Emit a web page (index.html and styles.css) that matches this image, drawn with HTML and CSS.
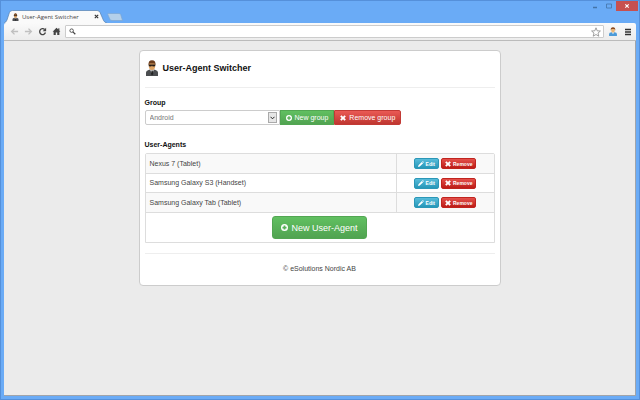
FILE: index.html
```html
<!DOCTYPE html>
<html lang="en">
<head>
<meta charset="utf-8">
<title>User-Agent Switcher</title>
<link rel="stylesheet" href="styles.css">
</head>
<body>
<svg class="defs" aria-hidden="true">
  <symbol id="agent" viewBox="0 0 14 16">
    <path fill="#4b4d50" d="M1 16v-3.500q0-2 2.500-2.500L5 9.500h4l1.500.5q2.500.500 2.500 2.500V16z"/>
    <path fill="#eee" d="M5 9.500h4L7 14z"/>
    <path fill="#222" d="M6.500 10.500h1.200l.6 3.500L7 15.500 6 14z"/>
    <ellipse cx="7" cy="5.500" rx="3.200" ry="4.500" fill="#dfa565"/>
    <path fill="#6b3c1c" d="M3.500 5.500Q3 .3 7 .3t3.500 5.200L9.500 3.500h-5z"/>
    <path fill="#221a17" d="M3.800 4.600h6.400v1.600l-2.500.4L7 5.600l-.8 1-2.400-.4z"/>
  </symbol>
  <symbol id="person" viewBox="0 0 14 16">
    <path fill="#4d9bd8" d="M0 16v-3.500Q0 10 4.500 9.500h5Q14 10 14 12.500V16z"/>
    <path fill="#fff" d="M5 9.500h4L7 13z"/>
    <ellipse cx="7" cy="5.500" rx="3.400" ry="4.500" fill="#eab676"/>
    <path fill="#8b4a20" d="M3 6Q2.500.3 7 .3T11 6L9.500 3.500h-5z"/>
  </symbol>
  <symbol id="plus" viewBox="0 0 12 12">
    <path fill="#fff" fill-rule="evenodd" d="M6 0a6 6 0 1 0 0 12A6 6 0 0 0 6 0zM4.500 2.500h3v2h2v3h-2v2h-3v-2h-2v-3h2z"/>
  </symbol>
  <symbol id="cross" viewBox="0 0 12 12">
    <path fill="#fff" d="M3 .3l3 3 3-3L11.700 3l-3 3 3 3L9 11.700l-3-3-3 3L.3 9l3-3-3-3z"/>
  </symbol>
  <symbol id="pencil" viewBox="0 0 12 12">
    <path fill="#fff" d="M0 12l1-3.500L7.700 1.800l2.500 2.500L3.500 11zM8.500 1L9.500 0 12 2.500l-1 1z"/>
  </symbol>
</svg>
<div class="window">
  <header class="titlebar">
    <div class="tab">
      <svg class="tab-shape" viewBox="0 0 104 13" preserveAspectRatio="none" aria-hidden="true"><path d="M0 13Q2 12.500 3 10L5.500 2.500Q6.300.5 8.500.5H94Q96 .5 97 2.500L100.500 10.500Q101.500 12.500 104 13" fill="#fafafa" stroke="#5580ae" stroke-width=".7"/></svg>
      <svg class="tab-icon"><use href="#agent"/></svg>
      <span class="tab-title">User-Agent Switcher</span>
      <button class="tab-close" aria-label="Close tab"><svg viewBox="0 0 5 5"><path d="M.8.8l3.400 3.400M4.200.8L.8 4.200" stroke="#333" stroke-width="1.100"/></svg></button>
    </div>
    <button class="new-tab" aria-label="New tab"><svg viewBox="0 0 16 8"><path d="M1.500.5H12Q13.200.5 13.700 1.500L15.500 7.500H5Q3.500 7.500 3 6.500L.8 1.500Q.5.5 1.500.5z" fill="#b4d0ea" stroke="#7ba6d2" stroke-width=".7"/></svg></button>
    <div class="controls">
      <button class="control" aria-label="Minimize"><svg viewBox="0 0 6 6"><path d="M1 4.500h4" stroke="#4474a8" stroke-width="1.500"/></svg></button>
      <button class="control" aria-label="Maximize"><svg viewBox="0 0 6 6"><path d="M.5 1h5v4h-5z" fill="none" stroke="#4474a8" stroke-width=".8"/></svg></button>
      <button class="control close" aria-label="Close"><svg viewBox="0 0 6 6"><path d="M1.300 1.300l3.400 3.400M4.700 1.300L1.300 4.700" stroke="#fff" stroke-width="1.100"/></svg></button>
    </div>
  </header>
  <nav class="toolbar">
    <button class="tool" aria-label="Back"><svg viewBox="0 0 10 10"><path d="M9 5H2M5 1.800L1.800 5 5 8.200" fill="none" stroke="#c0c0c0" stroke-width="1.500"/></svg></button>
    <button class="tool" aria-label="Forward"><svg viewBox="0 0 10 10"><path d="M1 5h7M5 1.800L8.200 5 5 8.200" fill="none" stroke="#c0c0c0" stroke-width="1.500"/></svg></button>
    <button class="tool" aria-label="Reload"><svg viewBox="0 0 10 10"><path d="M8.300 6.200A3.300 3.300 0 1 1 7.400 2.700" fill="none" stroke="#444" stroke-width="1.500"/><path d="M9 .8v3.800H5.200z" fill="#444"/></svg></button>
    <button class="tool" aria-label="Home"><svg viewBox="0 0 10 10"><path d="M5 .8L.7 5.200h1.100V9h2.400V6.200h1.600V9h2.400V5.200h1.100L8.200 4V1.500H7v1.300z" fill="#444"/></svg></button>
    <div class="omnibox">
      <svg class="search" viewBox="0 0 8 8" aria-hidden="true"><circle cx="3" cy="3" r="2" fill="none" stroke="#444"/><path d="M4.500 4.500L7.200 7.200" stroke="#444" stroke-width="1.400"/></svg>
      <input type="text" aria-label="Address">
      <button class="star" aria-label="Bookmark"><svg viewBox="0 0 10 10"><path d="M5 .8l1.200 3 3.200.2L7 6.100l.8 3.100L5 7.500 2.200 9.200 3 6.100.6 4l3.200-.2z" fill="#fff" stroke="#888" stroke-width=".8"/></svg></button>
    </div>
    <button class="tool agent-button" aria-label="User-Agent Switcher"><svg><use href="#person"/></svg></button>
    <button class="tool menu" aria-label="Menu"><svg viewBox="0 0 8 8"><path d="M1 1.500h6M1 4h6M1 6.500h6" stroke="#333" stroke-width="1.300"/></svg></button>
  </nav>
  <main class="page">
    <section class="card">
      <h1><svg><use href="#agent"/></svg>User-Agent Switcher</h1>
      <form class="group">
        <label for="group">Group</label>
        <div class="group-row">
          <div class="select">
            <select id="group"><option>Android</option></select>
            <span class="arrow"><svg viewBox="0 0 5 4"><path d="M.5.800L2.500 2.800 4.500.8" fill="none" stroke="#222"/></svg></span>
          </div>
          <button type="button" class="btn green"><svg><use href="#plus"/></svg>New group</button>
          <button type="button" class="btn red"><svg><use href="#cross"/></svg>Remove group</button>
        </div>
      </form>
      <h2 id="agents">User-Agents</h2>
      <table aria-labelledby="agents">
        <tbody>
          <tr><td>Nexus 7 (Tablet)</td><td class="actions"><button class="btn mini blue"><svg><use href="#pencil"/></svg>Edit</button><button class="btn mini red"><svg><use href="#cross"/></svg>Remove</button></td></tr>
          <tr><td>Samsung Galaxy S3 (Handset)</td><td class="actions"><button class="btn mini blue"><svg><use href="#pencil"/></svg>Edit</button><button class="btn mini red"><svg><use href="#cross"/></svg>Remove</button></td></tr>
          <tr><td>Samsung Galaxy Tab (Tablet)</td><td class="actions"><button class="btn mini blue"><svg><use href="#pencil"/></svg>Edit</button><button class="btn mini red"><svg><use href="#cross"/></svg>Remove</button></td></tr>
        </tbody>
        <tfoot>
          <tr><td colspan="2"><button class="btn large green"><svg><use href="#plus"/></svg>New User-Agent</button></td></tr>
        </tfoot>
      </table>
      <footer>© eSolutions Nordic AB</footer>
    </section>
  </main>
</div>
</body>
</html>
```
FILE: styles.css
```css
* { box-sizing: border-box; }
body {
  margin: 0;
  font-family: "Liberation Sans", Arial, sans-serif;
  font-size: 7px;
  line-height: 10px;
  color: #444;
}
button, input, select { font: inherit; margin: 0; }
button { border: 0; padding: 0; background: none; }
svg { display: block; }
.defs { position: absolute; width: 0; height: 0; }

.window {
  display: flex;
  flex-direction: column;
  min-height: 100vh;
  padding: 0 3px 3px;
  background: #6aabf6;
  border: 1px solid #5590da;
}

/* Title bar and tabs */
.titlebar { display: flex; align-items: flex-end; height: 22px; margin-right: -2px; }
.tab {
  position: relative;
  display: flex;
  align-items: center;
  width: 103px;
  height: 13px;
  padding: 0 8px;
}
.tab-shape { position: absolute; inset: 0; width: 100%; height: 100%; }
.tab-icon { position: relative; width: 7px; height: 8px; margin-right: 3px; }
.tab-title {
  position: relative;
  flex: 1;
  font-family: "Open Sans", sans-serif;
  font-size: 6px;
  color: #444;
  white-space: nowrap;
}
.tab-close { position: relative; }
.tab-close svg { width: 5px; height: 5px; }
.new-tab { margin-bottom: 2px; }
.new-tab svg { width: 16px; height: 8px; }
.controls { display: flex; align-self: flex-start; margin-left: auto; }
.control { display: grid; place-items: center; width: 14px; height: 10px; }
.control svg { width: 6px; height: 6px; }
.control.close { width: 22px; background: #c75050; }

/* Toolbar */
.toolbar {
  display: flex;
  align-items: center;
  height: 18px;
  padding: 0 0 0 3px;
  background: linear-gradient(#fafafa, #ececec);
  border-bottom: 1px solid #bbb;
  border-radius: 2px 2px 0 0;
}
.tool { display: grid; place-items: center; width: 14px; height: 14px; }
.tool svg { width: 9px; height: 9px; }
.omnibox {
  display: flex;
  align-items: center;
  flex: 1;
  height: 13px;
  margin: 0 2px;
  padding: 0 2px 0 3px;
  background: #fff;
  border: 1px solid #ccc;
  border-radius: 1px;
}
.omnibox input { flex: 1; min-width: 0; height: 10px; padding: 0 4px; border: 0; background: none; }
.search { width: 7px; height: 7px; }
.star svg { width: 10px; height: 10px; }
.menu { width: 16px; }
.menu svg { width: 8px; height: 8px; }
.agent-button svg { width: 8px; height: 9px; }

/* Page */
.page {
  flex: 1;
  padding: 9px 16px 16px;
  background: #ebebeb;
  border: solid #a0a4aa;
  border-width: 0 1px 1px 0;
}
.card {
  max-width: 362px;
  margin: 0 auto;
  padding: 5px;
  background: #fff;
  border: 1px solid #ccc;
  border-radius: 4px;
}
h1 {
  display: flex;
  align-items: center;
  gap: 4px;
  height: 32px;
  margin: 0 0 10px;
  padding-bottom: 7px;
  border-bottom: 1px solid #eee;
  font-size: 9px;
  color: #111;
}
h1 svg { width: 14px; height: 16px; }
label, h2 { display: block; margin: 0; font-size: 7px; font-weight: bold; line-height: 10px; color: #111; }
label { margin-bottom: 2px; }
h2 { margin: 15px 0 3px; }
.group-row { display: flex; }
.select { position: relative; width: 135px; }
select {
  display: block;
  appearance: none;
  width: 100%;
  height: 15px;
  padding: 0 4px;
  background: #fff;
  border: 1px solid #ccc;
  border-radius: 2px 0 0 2px;
  color: #777;
}
.arrow {
  position: absolute;
  top: 2px;
  right: 3px;
  display: grid;
  place-items: center;
  width: 9px;
  height: 11px;
  background: #e6e6e6;
  border: 1px solid #aaa;
  pointer-events: none;
}
.arrow svg { width: 5px; height: 4px; }

/* Buttons */
.btn {
  display: inline-flex;
  align-items: center;
  justify-content: center;
  gap: 3px;
  height: 15px;
  padding: 0 5px;
  color: #fff;
  white-space: nowrap;
}
.btn svg { width: 6px; height: 6px; }
.green { background: linear-gradient(#61c061, #51a351); border: 1px solid #52a652; }
.red { background: linear-gradient(#ea5a55, #bf3630); border: 1px solid #c23a35; }
.blue { background: linear-gradient(#58bcda, #2597b8); border: 1px solid #2b97b7; }
.group-row .red { border-radius: 0 2px 2px 0; }
.mini { height: 11px; padding: 0 3px; gap: 2px; border-radius: 2px; font-size: 5px; font-weight: bold; }
.mini.red { background: linear-gradient(#e4504b, #bd1c17); border-color: #c0241f; }
.large { height: 23px; padding: 0 8px; border-radius: 3px; font-size: 9px; }
.large svg { width: 7px; height: 7px; }

/* Table */
table {
  width: 100%;
  border: 1px solid #ddd;
  border-radius: 2px 2px 0 0;
  border-spacing: 0;
}
td { height: 19px; padding: 0 4px; }
tr + tr td, tfoot td { border-top: 1px solid #ddd; }
tr:last-child td { height: 20px; }
tbody tr:nth-child(odd) td { background: #f9f9f9; }
td.actions { width: 98px; border-left: 1px solid #ddd; }
.actions { text-align: center; white-space: nowrap; font-size: 0; }
.actions .btn { vertical-align: middle; }
.actions .btn + .btn { margin-left: 2px; }
tfoot tr:last-child td { height: 30px; text-align: center; }
tfoot .btn { vertical-align: middle; }
footer {
  margin-top: 10px;
  padding: 10px 0 6px;
  border-top: 1px solid #eee;
  text-align: center;
}
```
